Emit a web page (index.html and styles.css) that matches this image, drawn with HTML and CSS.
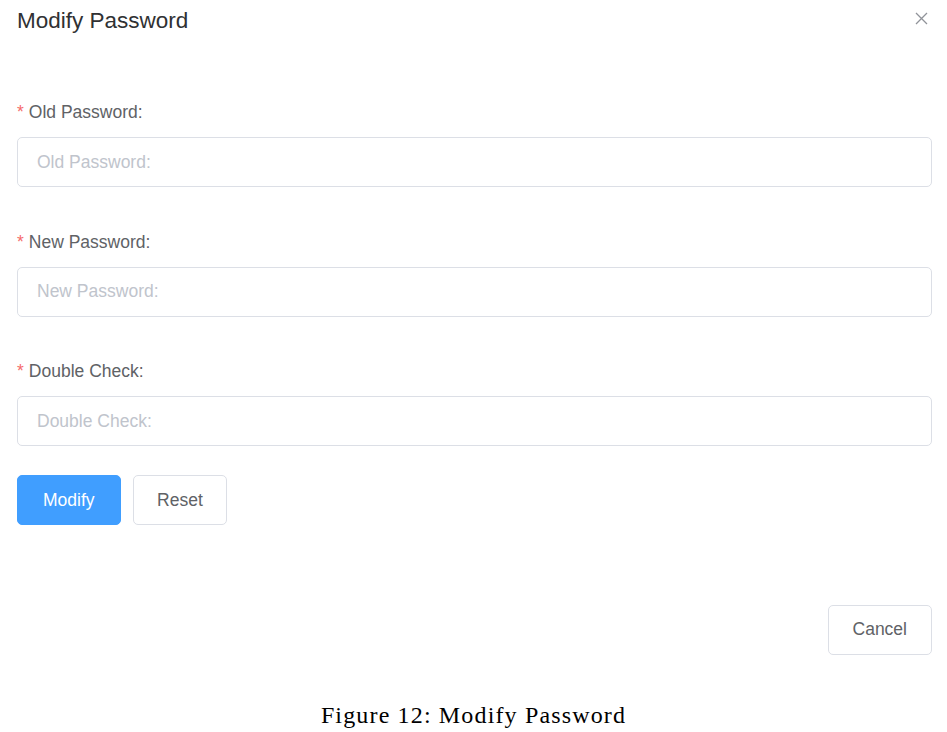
FILE: index.html
```html
<!DOCTYPE html>
<html lang="en">
<head>
<meta charset="utf-8">
<title>Modify Password</title>
<link rel="stylesheet" href="styles.css">
</head>
<body>
<div class="dialog">
  <header class="dialog-header">
    <span class="dialog-title">Modify Password</span>
    <button class="dialog-close" type="button" aria-label="Close">
      <svg width="13" height="13" viewBox="0 0 13 13"><path d="M1 1L12 12M12 1L1 12" stroke="#909399" stroke-width="1.3" fill="none"/></svg>
    </button>
  </header>
  <form class="form">
    <div class="form-item">
      <label class="form-label"><span class="req">*</span>Old Password:</label>
      <input class="form-input" type="password" placeholder="Old Password:">
    </div>
    <div class="form-item">
      <label class="form-label"><span class="req">*</span>New Password:</label>
      <input class="form-input" type="password" placeholder="New Password:">
    </div>
    <div class="form-item">
      <label class="form-label"><span class="req">*</span>Double Check:</label>
      <input class="form-input" type="password" placeholder="Double Check:">
    </div>
    <div class="form-actions">
      <button class="btn btn-primary" type="button">Modify</button>
      <button class="btn btn-reset" type="button">Reset</button>
    </div>
  </form>
  <footer class="dialog-footer">
    <button class="btn btn-cancel" type="button">Cancel</button>
  </footer>
</div>
<p class="caption">Figure 12: Modify Password</p>
</body>
</html>
```
FILE: styles.css
```css
* { box-sizing: border-box; }
html, body { margin: 0; padding: 0; background: #fff; }
body { font-family: "Liberation Sans", Arial, Helvetica, sans-serif; }

.dialog {
  padding: 0 15px 0 17px;
}

.dialog-header {
  display: flex;
  justify-content: space-between;
  align-items: flex-start;
  padding-top: 6px;
}
.dialog-title {
  font-size: 22.5px;
  line-height: 30px;
  color: #303133;
}
.dialog-close {
  border: 0;
  background: none;
  padding: 0;
  margin: 6px 4px 0 0;
  width: 13px;
  height: 13px;
  display: flex;
  cursor: pointer;
}

.form {
  padding-top: 61px;
  display: flex;
  flex-direction: column;
}
.form-item + .form-item { margin-top: 39.5px; }
.form-label {
  display: block;
  font-size: 17.5px;
  line-height: 30px;
  color: #606266;
  margin-bottom: 10px;
}
.req {
  color: #f56c6c;
  margin-right: 5px;
}
.form-input {
  display: block;
  width: 100%;
  height: 50px;
  border: 1px solid #dcdfe6;
  border-radius: 5px;
  padding: 0 19px;
  font-family: inherit;
  font-size: 17.5px;
  color: #606266;
  outline: none;
  background: #fff;
}
.form-input::placeholder { color: #c0c4cc; }

.form-actions {
  margin-top: 29px;
  display: flex;
  gap: 12px;
}

.btn {
  height: 50px;
  padding: 0 24.5px;
  border: 1px solid #dcdfe6;
  border-radius: 5px;
  background: #fff;
  color: #606266;
  font-family: inherit;
  font-size: 17.5px;
  cursor: pointer;
}
.btn-primary {
  background: #409eff;
  border-color: #409eff;
  color: #fff;
  padding: 0 25px;
}
.btn-reset { padding: 0 23.5px; }
.btn-cancel { padding: 0 24px; }

.dialog-footer {
  margin-top: 79.5px;
  display: flex;
  justify-content: flex-end;
}

.caption {
  margin: 46.6px 0 0;
  text-align: center;
  font-family: "Liberation Serif", "Times New Roman", serif;
  font-size: 24px;
  line-height: 28px;
  letter-spacing: 1.15px;
  color: #000;
}
```
